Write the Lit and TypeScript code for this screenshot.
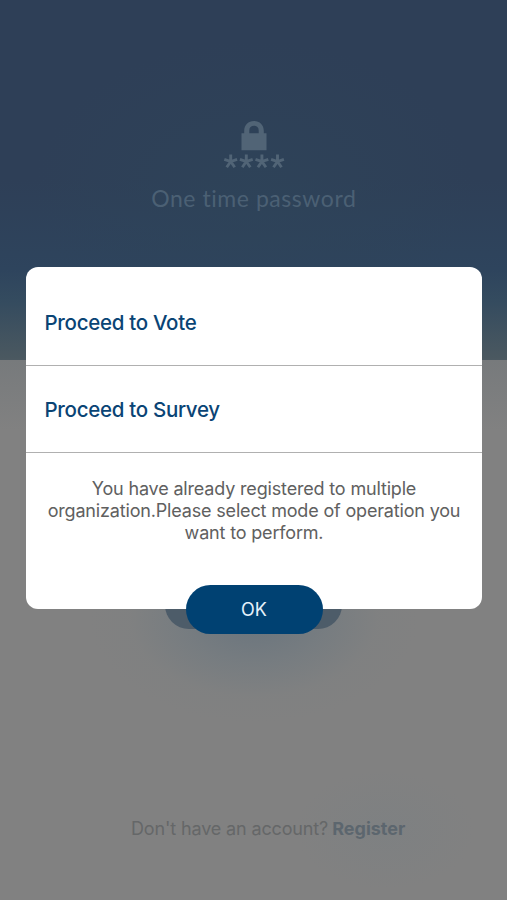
import { LitElement, html, css, svg } from "lit";
import { customElement } from "lit/decorators.js";

@customElement("app-root")
export class AppRoot extends LitElement {
  static styles = css`
    :host {
      display: block;
      position: relative;
      width: 507px;
      height: 900px;
      overflow: hidden;
      font-family: Inter, "Liberation Sans", sans-serif;
      background: #818181;
    }
    * { box-sizing: border-box; }
    .screen {
      height: 900px;
      display: flex;
      flex-direction: column;
      background:
        radial-gradient(ellipse 90px 60px at 385px 830px, rgba(118, 127, 132, 0.3), transparent),
        radial-gradient(ellipse 165px 105px at 254px 618px, rgba(103, 115, 125, 0.9), rgba(111, 121, 128, 0.55) 45%, rgba(122, 127, 129, 0.2) 75%, rgba(129, 129, 129, 0)),
        linear-gradient(#777a7c 360px, #818181 430px);
    }
    .hero {
      height: 360px;
      flex: none;
      display: flex;
      flex-direction: column;
      align-items: center;
      padding-top: 120px;
      background:
        radial-gradient(ellipse 220px 150px at 254px 190px, rgba(46, 68, 89, 0.75), rgba(46, 66, 88, 0)),
        linear-gradient(#2e3f57 0, #2e3f57 180px, #2e445d 270px, #344b5f 300px, #4a5860 357px, #4c5961 360px);
    }
    .lock { display: block; width: 64px; height: 52px; fill: #516476; }
    .stars { stroke: #516476; stroke-width: 2.9; fill: none; }
    .title {
      margin-top: 12px;
      font: 400 23px/28px Lato, sans-serif;
      letter-spacing: 0.55px;
      margin-right: -0.55px;
      white-space: nowrap;
      color: #4b6074;
    }
    .form {
      flex: none;
      height: 269px;
      display: flex;
      justify-content: center;
      align-items: flex-end;
    }
    .submit {
      width: 177px;
      height: 48px;
      border-radius: 24px;
      background: #4d5c69;
    }
    .signup {
      margin-top: 187px;
      padding-left: 131px;
      font-size: 18px;
      line-height: 25px;
      white-space: nowrap;
      color: #656768;
    }
    .ask { letter-spacing: -0.14px; }
    .register { font-weight: 700; color: #5c666e; margin-left: -1px; }
    .dialog {
      position: absolute;
      left: 26px;
      top: 267px;
      width: 456px;
      height: 342px;
      border-radius: 12px;
      background: #fff;
      display: flex;
      flex-direction: column;
      align-items: center;
    }
    .option {
      align-self: stretch;
      height: 87px;
      flex: none;
      display: flex;
      align-items: center;
      padding: 1px 0 0 18.5px;
      border-bottom: 1.5px solid #b0b0b0;
      font-size: 20.5px;
      font-weight: 500;
      line-height: 26px;
      letter-spacing: -0.3px;
      color: #0a4475;
      white-space: nowrap;
    }
    .option:first-child { height: 99px; padding-top: 13px; }
    .message {
      flex: none;
      margin: 25px 0 0;
      text-align: center;
      font-size: 18px;
      line-height: 21.8px;
      letter-spacing: -0.17px;
      white-space: nowrap;
      color: #606060;
    }
    .message span { display: block; }
    .ok {
      margin: auto 0 -24.5px;
      width: 137px;
      height: 48.5px;
      flex: none;
      padding: 1px 0 0;
      border: 0;
      border-radius: 25px;
      background: #004172;
      color: #e6f1fa;
      font: 400 18px/24px Inter, sans-serif;
    }
  `;

  render() {
    return html`
      <main class="screen">
        <header class="hero">
          <svg class="lock" viewBox="0 0 64 52" aria-hidden="true">
            <path fill-rule="evenodd" d="M19.5 13.3H22.2V10.8C22.2 5 26.3 1 32 1S41.8 5 41.8 10.8V13.3H44.5V30.2H19.5ZM27.3 13.3H36.7V10.4C36.7 7.3 34.8 5.8 32 5.8S27.3 7.3 27.3 10.4Z" />
            <g class="stars">
              ${[8.7, 24.3, 39.9, 55.5].map(
                (x) => svg`<path transform=${`translate(${x} 41.5)`} d="M0 -7V0M-6.4 -2.2L0 0L6.4 -2.2M-4 5.8L0 0L4 5.8" />`
              )}
            </g>
          </svg>
          <div class="title">One time password</div>
        </header>
        <div class="form"><div class="submit"></div></div>
        <div class="signup">
          <span class="ask">Don't have an account?</span>
          <span class="register">Register</span>
        </div>
      </main>
      <section class="dialog" role="dialog">
        <div class="option">Proceed to Vote</div>
        <div class="option">Proceed to Survey</div>
        <p class="message">
          <span>You have already registered to multiple</span>
          <span>organization.Please select mode of operation you</span>
          <span>want to perform.</span>
        </p>
        <button class="ok">OK</button>
      </section>
    `;
  }
}
